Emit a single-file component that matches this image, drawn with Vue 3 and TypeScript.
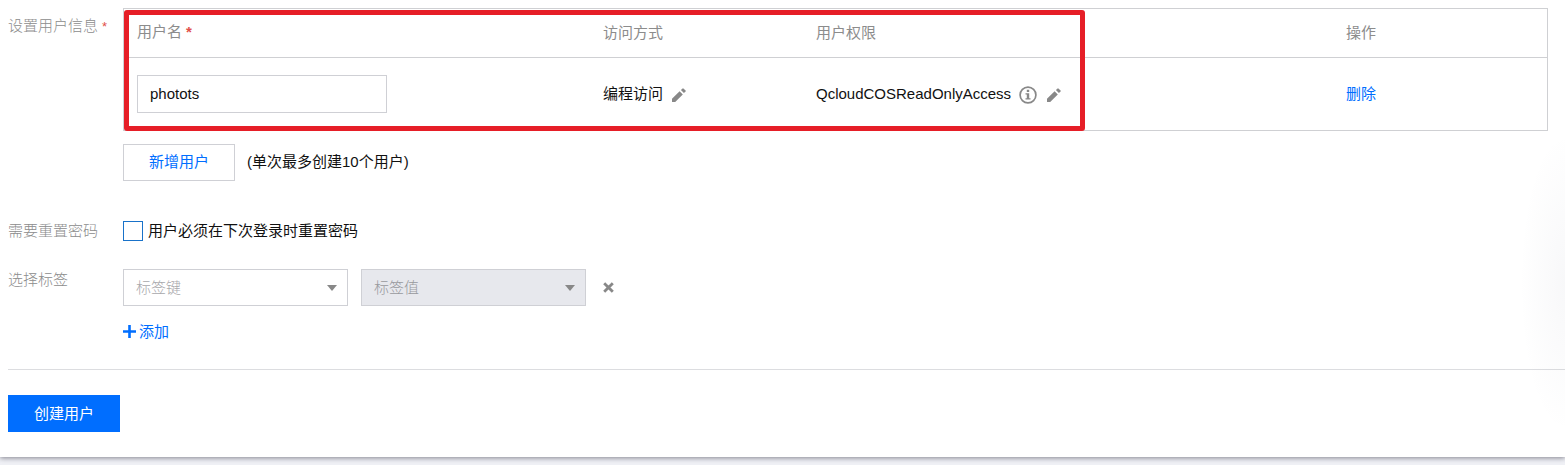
<script setup lang="ts">
import { ref } from 'vue'

interface UserRow {
  name: string
  access: string
  policy: string
}

const users = ref<UserRow[]>([
  { name: 'photots', access: '编程访问', policy: 'QcloudCOSReadOnlyAccess' },
])
const mustReset = ref(false)
</script>

<template>
  <main class="page">
    <section class="panel">
      <div class="row users">
        <div class="label">设置用户信息<span class="star small">*</span></div>
        <div class="content">
          <div class="table">
            <div class="tr head">
              <span class="first">用户名<b class="star">*</b></span>
              <span>访问方式</span>
              <span>用户权限</span>
              <span>操作</span>
            </div>
            <div v-for="user in users" :key="user.name" class="tr body">
              <div><input v-model="user.name" class="name" type="text" /></div>
              <div class="cell">
                <span>{{ user.access }}</span>
                <svg class="pen access-pen" viewBox="0 0 14 14"><path d="M0 14V10.8L7.6 3.2L10.8 6.4L3.2 14ZM8.9 2.1L10.6.4Q11 0 11.4.4L13.6 2.6Q14 3 13.6 3.4L11.9 5.1Z" /></svg>
              </div>
              <div class="cell">
                <span>{{ user.policy }}</span>
                <svg class="info" viewBox="0 0 18 18"><circle cx="9" cy="9" r="7.9" /><path d="M7.8 3.7h2.4v2.2H7.8zM6.5 7.2h3.7v5h1.3v1.4h-5v-1.4h1.3V8.6H6.5z" /></svg>
                <svg class="pen" viewBox="0 0 14 14"><path d="M0 14V10.8L7.6 3.2L10.8 6.4L3.2 14ZM8.9 2.1L10.6.4Q11 0 11.4.4L13.6 2.6Q14 3 13.6 3.4L11.9 5.1Z" /></svg>
              </div>
              <div><a class="link">删除</a></div>
            </div>
            <div class="highlight"></div>
          </div>
          <div class="append">
            <button class="btn outline">新增用户</button>
            <span>(单次最多创建10个用户)</span>
          </div>
        </div>
      </div>

      <div class="row reset">
        <div class="label">需要重置密码</div>
        <label class="check">
          <input v-model="mustReset" type="checkbox" />
          <span>用户必须在下次登录时重置密码</span>
        </label>
      </div>

      <div class="row tags">
        <div class="label">选择标签</div>
        <div class="content">
          <div class="selects">
            <div class="select"><span>标签键</span><i class="caret"></i></div>
            <div class="select disabled"><span>标签值</span><i class="caret"></i></div>
            <svg class="close" viewBox="0 0 11 11"><path d="M1.2 1.2L9.8 9.8M9.8 1.2L1.2 9.8" /></svg>
          </div>
          <a class="link add">
            <svg viewBox="0 0 13 13"><path d="M6.5 0V13M0 6.5H13" /></svg>
            <span>添加</span>
          </a>
        </div>
      </div>

      <footer class="footer">
        <button class="btn primary">创建用户</button>
      </footer>
      <div class="glow"></div>
    </section>
  </main>
</template>

<style>
body {
  margin: 0;
  overflow: hidden;
}
</style>

<style scoped>
* {
  box-sizing: border-box;
}
.page {
  height: 465px;
  background: #f0f1f6;
  font: 15px/20px "Liberation Sans", "Noto Sans CJK SC", sans-serif;
  color: #111;
  overflow: hidden;
}
.panel {
  position: relative;
  height: 457px;
  padding: 8px 0 0 8px;
  background: #fff;
  box-shadow: 0 1px 5px rgba(55, 55, 70, 0.6);
}
.row {
  display: grid;
  grid-template-columns: 115px 1fr;
}
.label {
  color: #8c8c8c;
  font-weight: 300;
}
.star {
  margin-left: 4px;
  color: #e1504a;
}
.small {
  font-size: 13px;
}
.users {
  height: 212px;
}
.users .label {
  padding-top: 8px;
}
.table {
  position: relative;
  width: 1425px;
  height: 123px;
  border: 1px solid #cfd0d3;
}
.tr {
  display: grid;
  grid-template-columns: 466px 213px 530px 1fr;
  align-items: center;
  padding-left: 13px;
}
.head {
  height: 49px;
  border-bottom: 1px solid #cfd0d3;
  color: #8c8c8c;
}
.first {
  margin-top: -2px;
}
.body {
  height: 72px;
}
.name {
  display: block;
  width: 250px;
  height: 38px;
  padding: 0 12px 2px;
  border: 1px solid #cfd0d5;
  outline: none;
  font: inherit;
  color: inherit;
}
.cell {
  display: flex;
  align-items: center;
}
.pen {
  width: 14px;
  height: 14px;
  margin: 1px 0 0 10px;
  fill: #888;
}
.access-pen {
  margin-left: 9px;
}
.info {
  width: 18px;
  height: 18px;
  margin: 2px 0 0 8px;
  fill: #888;
}
.info circle {
  fill: none;
  stroke: #888;
  stroke-width: 1.7;
}
.highlight {
  position: absolute;
  top: 1px;
  left: 0;
  width: 961px;
  height: 121px;
  border: 5px solid #e61e27;
  border-radius: 3px;
}
.link {
  color: #006eff;
}
.append {
  display: flex;
  align-items: center;
  gap: 12px;
  margin-top: 13px;
}
.btn {
  width: 112px;
  height: 37px;
  padding: 0;
  border: 0;
  font: inherit;
}
.outline {
  padding-bottom: 1px;
  border: 1px solid #cfd0d5;
  background: #fff;
  color: #006eff;
}
.append span {
  margin-top: -2px;
}
.primary {
  background: #006eff;
  color: #fff;
}
.reset {
  height: 48px;
}
.reset .label {
  padding-top: 1px;
}
.check {
  display: flex;
  align-items: flex-start;
  gap: 5px;
}
.check input {
  appearance: none;
  width: 20px;
  height: 20px;
  margin: 1px 0 0;
  border: 1px solid #1972c9;
  background: #fff;
}
.check span {
  padding-top: 1px;
}
.tags {
  height: 101px;
}
.tags .label {
  padding-top: 2px;
}
.selects {
  display: flex;
  align-items: center;
  gap: 13px;
  margin-top: 1px;
}
.select {
  display: flex;
  align-items: center;
  justify-content: space-between;
  width: 225px;
  height: 37px;
  padding: 0 10px 0 12px;
  border: 1px solid #cfd0d5;
  color: #a8a8ac;
  font-weight: 300;
}
.disabled {
  background: #e7e8ed;
  color: #98999d;
}
.caret {
  border: 5px solid transparent;
  border-top: 6px solid #888;
  border-bottom: 0;
}
.close {
  width: 11px;
  height: 11px;
  margin-left: 4px;
  fill: none;
  stroke: #888;
  stroke-width: 2.8;
}
.add {
  display: inline-flex;
  align-items: center;
  gap: 3px;
  margin-top: 16px;
}
.add svg {
  width: 13px;
  height: 13px;
  margin-bottom: 1px;
  fill: none;
  stroke: #006eff;
  stroke-width: 2.6;
}
.footer {
  padding-top: 25px;
  border-top: 1px solid #dcdde0;
}
.glow {
  position: absolute;
  right: 0;
  top: 140px;
  width: 45px;
  height: 317px;
  background: radial-gradient(ellipse 45px 150px at 100% 45%, rgba(70, 75, 110, 0.04), transparent);
  pointer-events: none;
}
</style>
